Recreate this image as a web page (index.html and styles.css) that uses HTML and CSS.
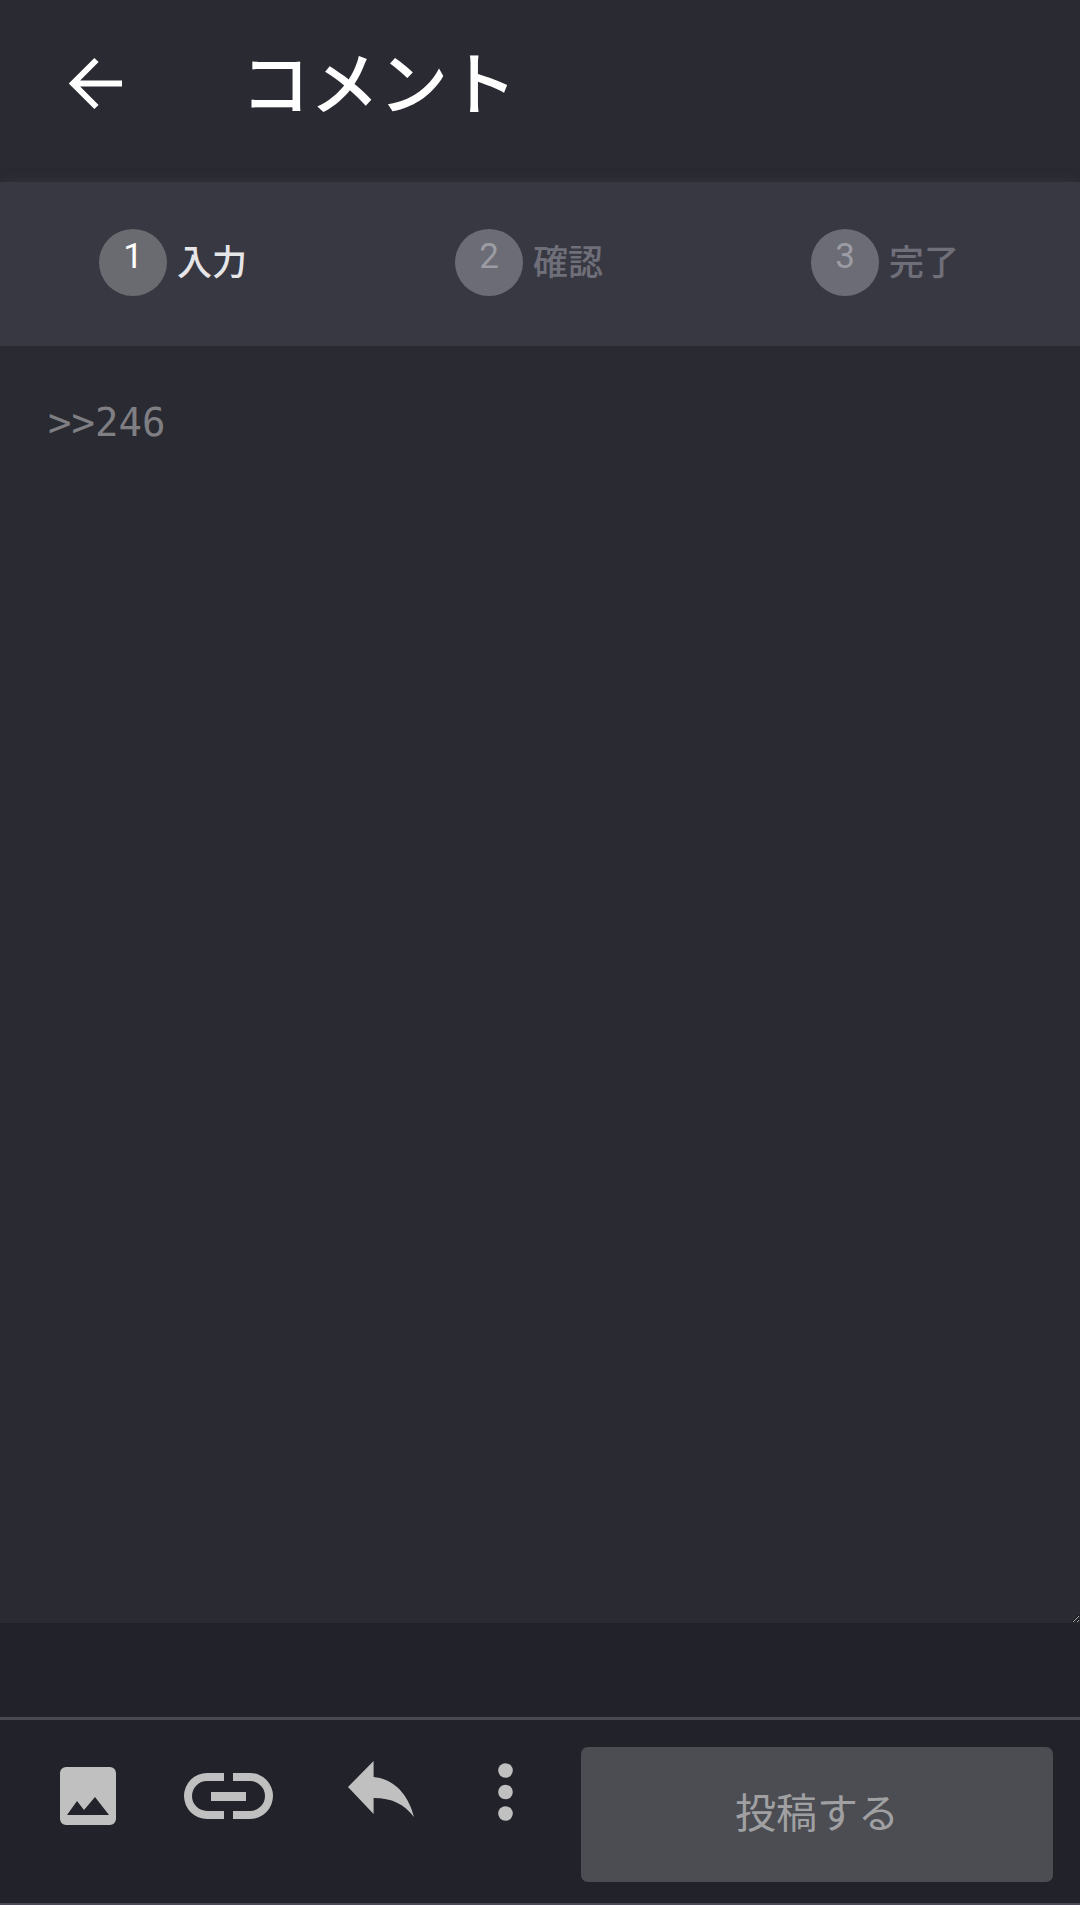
FILE: index.html
```html
<!DOCTYPE html>
<html lang="ja">
<head>
    <meta charset="UTF-8">
    <meta name="viewport" content="width=device-width, initial-scale=1.0">
    <title>コメント</title>
    <link rel="stylesheet" href="styles.css">
</head>
<body>
    <div class="page">
        <header class="header">
            <svg class="back" viewBox="0 0 54 54"><path d="M54 26.500H6M28.500 3 5 26.500 28.500 50"/></svg>
            <h1 class="title">コメント</h1>
        </header>
        <div class="steps">
            <div class="step active"><span class="num">1</span><span class="label">入力</span></div>
            <div class="step"><span class="num">2</span><span class="label">確認</span></div>
            <div class="step"><span class="num">3</span><span class="label">完了</span></div>
        </div>
        <textarea class="comment" spellcheck="false">&gt;&gt;246</textarea>
        <div class="spacer"></div>
        <div class="bar">
            <svg class="tool tool-image" viewBox="0 0 56 58"><path fill-rule="evenodd" d="M6 0H50A6 6 0 0 1 56 6V52A6 6 0 0 1 50 58H6A6 6 0 0 1 0 52V6A6 6 0 0 1 6 0ZM7 48H49L35 30 24 43 17 34Z"/></svg>
            <svg class="tool tool-link" viewBox="0 0 89 46"><path d="M40 0H23A23 23 0 0 0 23 46H40V38H23A15 15 0 0 1 23 8H40ZM49 0H66A23 23 0 0 1 66 46H49V38H66A15 15 0 0 0 66 8H49ZM27 19H62V28H27Z"/></svg>
            <svg class="tool tool-reply" viewBox="0 0 66 56"><path d="M0 26 25.600 0V16C48 18 61 36 66 56 56 43 44 37 25.600 37V53Z"/></svg>
            <svg class="tool tool-more" viewBox="0 0 15 58"><circle cx="7.500" cy="7.500" r="7.300"/><circle cx="7.500" cy="29" r="7.300"/><circle cx="7.500" cy="50.500" r="7.300"/></svg>
            <button class="submit">投稿する</button>
        </div>
    </div>
</body>
</html>
```

FILE: styles.css
```css
body {
    margin: 0;
    background-color: #2a2a32;
    font-family: "Noto Sans CJK JP", "Noto Sans", sans-serif;
}
.page {
    display: flex;
    flex-direction: column;
    height: 1905px;
    overflow: hidden;
}
.header {
    display: flex;
    align-items: center;
    height: 168px;
    padding-left: 68px;
    flex-shrink: 0;
}
.back {
    width: 54px;
    height: 54px;
    fill: none;
    stroke: #fff;
    stroke-width: 6;
}
.title {
    margin: 0 0 8px 119px;
    color: #fff;
    font-size: 69px;
    font-weight: 500;
    line-height: 1;
}
.steps {
    display: flex;
    align-items: flex-start;
    box-sizing: border-box;
    height: 164px;
    margin-top: 14px;
    padding: 47px 0 0 99px;
    background-color: #383843;
    box-shadow: 0 -6px 8px -4px rgba(56, 56, 67, 0.5);
    flex-shrink: 0;
}
.step {
    display: flex;
    align-items: center;
    gap: 10px;
    width: 356px;
    flex-shrink: 0;
}
.num {
    display: flex;
    justify-content: center;
    align-items: center;
    box-sizing: border-box;
    width: 68px;
    height: 67px;
    padding-bottom: 13px;
    border-radius: 50%;
    background-color: #6b6c75;
    color: #9c9ca4;
    font-family: Roboto, sans-serif;
    font-size: 35px;
    line-height: 1;
}
.label {
    margin-bottom: 7px;
    color: #6f6f79;
    font-size: 35px;
    font-weight: 500;
    line-height: 1;
}
.active .num {
    background-color: #6a6b71;
    color: #fff;
}
.active .label {
    color: #e6e6e8;
}
.comment {
    display: block;
    box-sizing: border-box;
    width: 100%;
    height: 1277px;
    margin: 0;
    padding: 54px 48px;
    border: none;
    outline: none;
    background-color: #2a2a32;
    color: #7f7f83;
    font-family: "DejaVu Sans Mono", monospace;
    font-size: 39px;
    line-height: 46px;
    color-scheme: dark;
    flex-shrink: 0;
}
.spacer {
    height: 94px;
    background-color: #21222a;
    flex-shrink: 0;
}
.bar {
    display: flex;
    align-items: flex-start;
    box-sizing: border-box;
    height: 188px;
    border-top: 3px solid #4a4a55;
    border-bottom: 2px solid #4a4a55;
    background-color: #21222a;
    flex-shrink: 0;
}
.tool {
    fill: #c0c0c0;
    flex-shrink: 0;
}
.tool-image {
    width: 56px;
    height: 58px;
    margin: 47px 0 0 60px;
}
.tool-link {
    width: 89px;
    height: 46px;
    margin: 53px 0 0 68px;
}
.tool-reply {
    width: 66px;
    height: 56px;
    margin: 41px 0 0 75px;
}
.tool-more {
    width: 15px;
    height: 58px;
    margin: 43px 0 0 84px;
}
.submit {
    width: 472px;
    height: 135px;
    margin: 27px 0 0 68px;
    padding: 0 0 9px;
    border: none;
    border-radius: 7px;
    background-color: #4c4d52;
    color: #a0a0a3;
    font-family: inherit;
    font-size: 41px;
    flex-shrink: 0;
}
```
